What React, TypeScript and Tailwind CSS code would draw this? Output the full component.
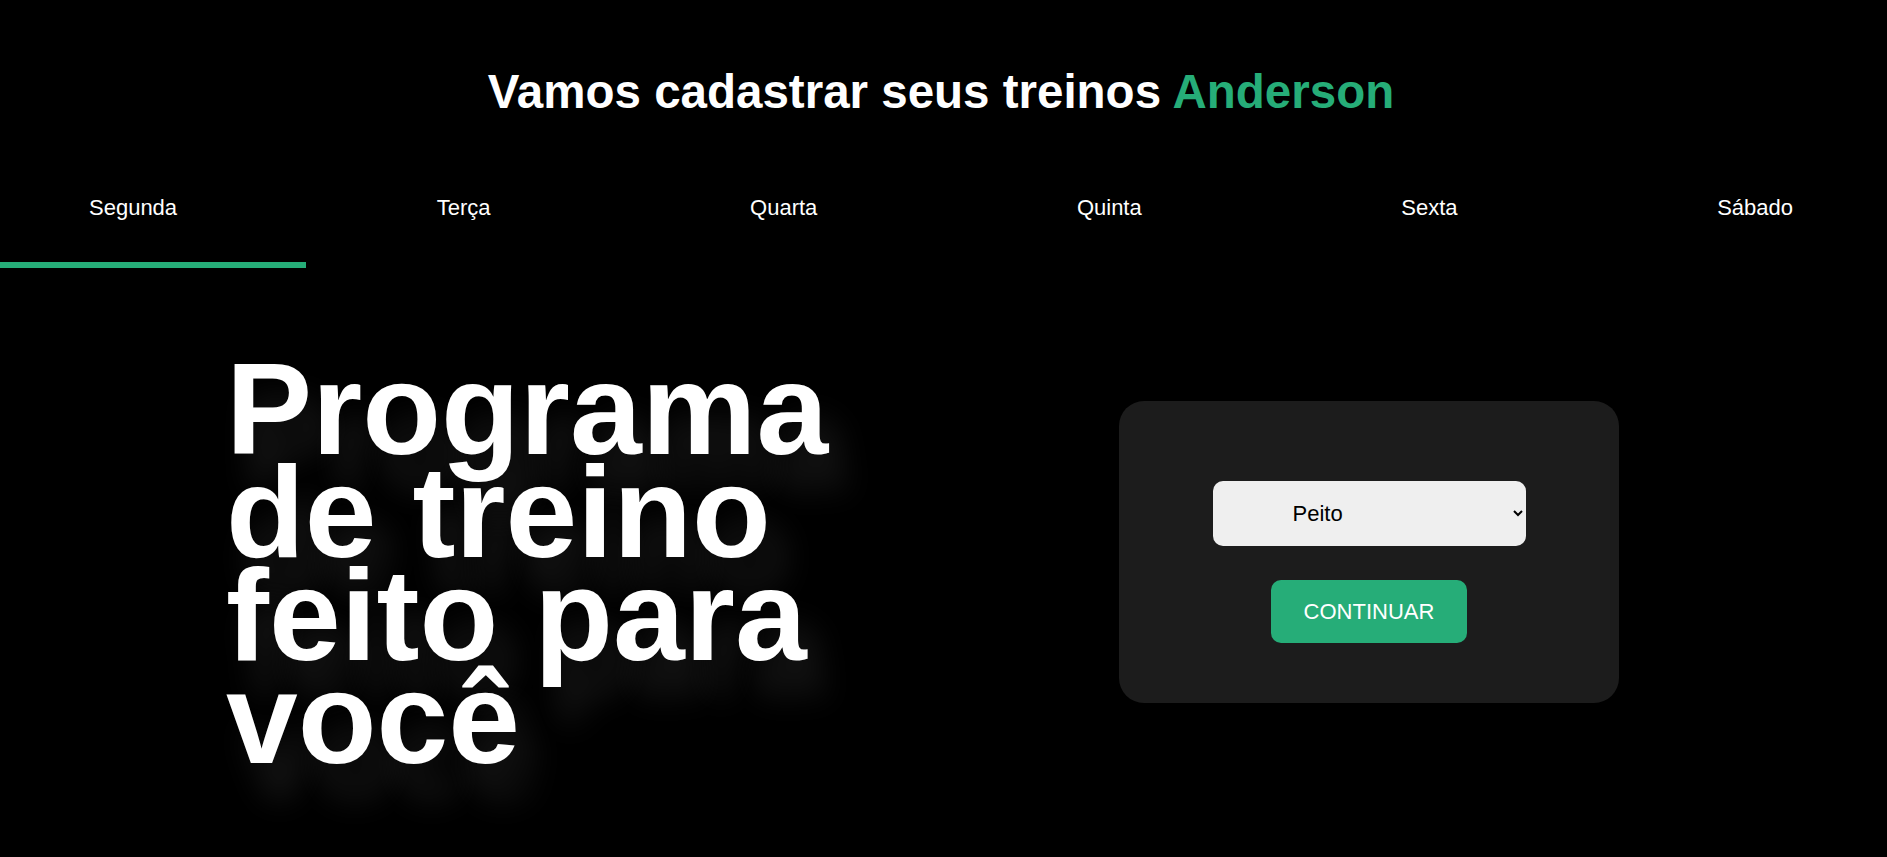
import React from "react";

const days = ["Segunda", "Terça", "Quarta", "Quinta", "Sexta", "Sábado"];

export default function App() {
  return (
    <div className="min-h-screen w-full bg-black text-white font-['Liberation_Sans',Arial,sans-serif] overflow-hidden">
      <h1 className="pt-[68px] pr-[5px] text-center text-[47.5px] font-bold leading-none">
        Vamos cadastrar seus treinos <span className="text-[#26ad78]">Anderson</span>
      </h1>

      <nav className="mt-[81px] flex justify-between pl-[89px] pr-[94px]">
        {days.map((d) => (
          <button key={d} className="text-[22px] leading-none text-white">
            {d}
          </button>
        ))}
      </nav>
      <div className="mt-[43px] h-[6px] w-[306px] bg-[#26ad78]" />

      <main className="mt-[90px] flex items-start pl-[226px]">
        <h2 className="w-[640px] text-[129px] font-bold leading-[0.8] [text-shadow:18px_35px_32px_rgba(255,255,255,0.1)]">
          Programa de treino feito para você
        </h2>
        <div className="ml-[253px] mt-[43px] flex h-[302px] w-[500px] flex-col items-center rounded-[25px] bg-[#1c1c1c] pt-[80px]">
          <select
            defaultValue="Peito"
            className="h-[65px] w-[313px] rounded-[10px] bg-[#efefef] pl-[76px] text-[22px] text-black outline-none"
          >
            <option>Peito</option>
            <option>Costas</option>
            <option>Pernas</option>
            <option>Ombros</option>
            <option>Braços</option>
          </select>
          <button className="mt-[34px] h-[63px] w-[196px] rounded-[10px] bg-[#26ad78] text-[22px] uppercase text-white">
            Continuar
          </button>
        </div>
      </main>
    </div>
  );
}
